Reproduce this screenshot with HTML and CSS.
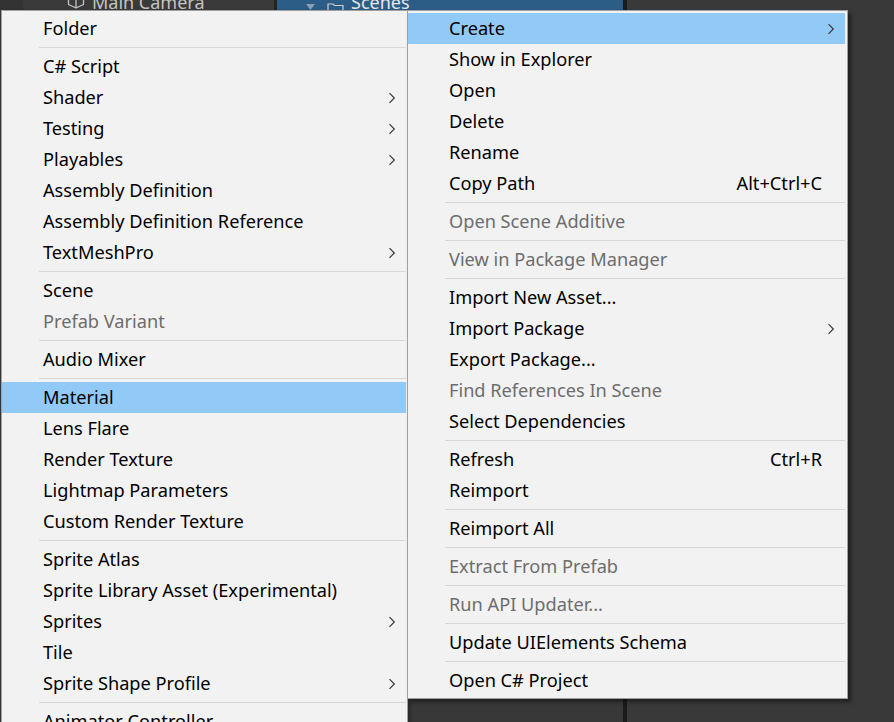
FILE: index.html
```html
<!DOCTYPE html>
<html lang="en">
<head>
<meta charset="utf-8">
<title>Project context menu</title>
<link rel="stylesheet" href="styles.css">
</head>
<body>
<div class="editor">
  <div class="panel hier">
    <div class="row hrow">
      <span class="gutter"></span>
      <svg class="cube" width="18" height="18" viewBox="0 0 18 18"><path d="M9 1.5 L16.5 5 L16.5 13.5 L9 17 L1.5 13.5 L1.5 5 Z M1.5 5 L9 8.5 L16.5 5 M9 8.5 L9 17" fill="none" stroke="#c4c4c4" stroke-width="1.3" stroke-linejoin="round"/></svg>
      <span class="hlabel">Main Camera</span>
    </div>
  </div>
  <div class="split thin"></div>
  <div class="panel tree">
    <div class="row trow">
      <svg class="tri" width="9" height="7" viewBox="0 0 9 7"><path d="M0 0 L9 0 L4.5 6 Z" fill="#8a9fb3"/></svg>
      <svg class="folder" width="17" height="14" viewBox="0 0 17 14"><path d="M1 2 L6 2 L7.5 3.5 L16 3.5 L16 13 L1 13 Z" fill="none" stroke="#d0d0d0" stroke-width="1.2"/></svg>
      <span class="tlabel">Scenes</span>
    </div>
  </div>
  <div class="split thick"></div>
  <div class="panel assets"></div>
</div>

<div class="menu menu-left">
  <div class="item"><span class="label">Folder</span></div>
  <div class="sep"></div>
  <div class="item"><span class="label">C# Script</span></div>
  <div class="item"><span class="label">Shader</span><svg class="chev" width="8" height="12" viewBox="0 0 8 12"><path d="M1.5 1.2 L6.3 6 L1.5 10.8" fill="none" stroke="#3a3a3a" stroke-width="1.2"/></svg></div>
  <div class="item"><span class="label">Testing</span><svg class="chev" width="8" height="12" viewBox="0 0 8 12"><path d="M1.5 1.2 L6.3 6 L1.5 10.8" fill="none" stroke="#3a3a3a" stroke-width="1.2"/></svg></div>
  <div class="item"><span class="label">Playables</span><svg class="chev" width="8" height="12" viewBox="0 0 8 12"><path d="M1.5 1.2 L6.3 6 L1.5 10.8" fill="none" stroke="#3a3a3a" stroke-width="1.2"/></svg></div>
  <div class="item"><span class="label">Assembly Definition</span></div>
  <div class="item"><span class="label">Assembly Definition Reference</span></div>
  <div class="item"><span class="label">TextMeshPro</span><svg class="chev" width="8" height="12" viewBox="0 0 8 12"><path d="M1.5 1.2 L6.3 6 L1.5 10.8" fill="none" stroke="#3a3a3a" stroke-width="1.2"/></svg></div>
  <div class="sep"></div>
  <div class="item"><span class="label">Scene</span></div>
  <div class="item disabled"><span class="label">Prefab Variant</span></div>
  <div class="sep"></div>
  <div class="item"><span class="label">Audio Mixer</span></div>
  <div class="sep"></div>
  <div class="item hl"><span class="label">Material</span></div>
  <div class="item"><span class="label">Lens Flare</span></div>
  <div class="item"><span class="label">Render Texture</span></div>
  <div class="item"><span class="label">Lightmap Parameters</span></div>
  <div class="item"><span class="label">Custom Render Texture</span></div>
  <div class="sep"></div>
  <div class="item"><span class="label">Sprite Atlas</span></div>
  <div class="item"><span class="label">Sprite Library Asset (Experimental)</span></div>
  <div class="item"><span class="label">Sprites</span><svg class="chev" width="8" height="12" viewBox="0 0 8 12"><path d="M1.5 1.2 L6.3 6 L1.5 10.8" fill="none" stroke="#3a3a3a" stroke-width="1.2"/></svg></div>
  <div class="item"><span class="label">Tile</span></div>
  <div class="item"><span class="label">Sprite Shape Profile</span><svg class="chev" width="8" height="12" viewBox="0 0 8 12"><path d="M1.5 1.2 L6.3 6 L1.5 10.8" fill="none" stroke="#3a3a3a" stroke-width="1.2"/></svg></div>
  <div class="sep"></div>
  <div class="item"><span class="label">Animator Controller</span></div>
  <div class="item"><span class="label">Animation</span></div>
</div>

<div class="menu menu-right">
  <div class="item hl"><span class="label">Create</span><svg class="chev" width="8" height="12" viewBox="0 0 8 12"><path d="M1.5 1.2 L6.3 6 L1.5 10.8" fill="none" stroke="#3a3a3a" stroke-width="1.2"/></svg></div>
  <div class="item"><span class="label">Show in Explorer</span></div>
  <div class="item"><span class="label">Open</span></div>
  <div class="item"><span class="label">Delete</span></div>
  <div class="item"><span class="label">Rename</span></div>
  <div class="item"><span class="label">Copy Path</span><span class="key">Alt+Ctrl+C</span></div>
  <div class="sep"></div>
  <div class="item disabled"><span class="label">Open Scene Additive</span></div>
  <div class="sep"></div>
  <div class="item disabled"><span class="label">View in Package Manager</span></div>
  <div class="sep"></div>
  <div class="item"><span class="label">Import New Asset...</span></div>
  <div class="item"><span class="label">Import Package</span><svg class="chev" width="8" height="12" viewBox="0 0 8 12"><path d="M1.5 1.2 L6.3 6 L1.5 10.8" fill="none" stroke="#3a3a3a" stroke-width="1.2"/></svg></div>
  <div class="item"><span class="label">Export Package...</span></div>
  <div class="item disabled"><span class="label">Find References In Scene</span></div>
  <div class="item"><span class="label">Select Dependencies</span></div>
  <div class="sep"></div>
  <div class="item"><span class="label">Refresh</span><span class="key">Ctrl+R</span></div>
  <div class="item"><span class="label">Reimport</span></div>
  <div class="sep"></div>
  <div class="item"><span class="label">Reimport All</span></div>
  <div class="sep"></div>
  <div class="item disabled"><span class="label">Extract From Prefab</span></div>
  <div class="sep"></div>
  <div class="item disabled"><span class="label">Run API Updater...</span></div>
  <div class="sep"></div>
  <div class="item"><span class="label">Update UIElements Schema</span></div>
  <div class="sep"></div>
  <div class="item"><span class="label">Open C# Project</span></div>
</div>
</body>
</html>
```

FILE: styles.css
```css
html, body {
  margin: 0;
  padding: 0;
  width: 894px;
  height: 722px;
  overflow: hidden;
  background: #383838;
  font-family: "Noto Sans", "Open Sans", sans-serif;
}

.editor {
  display: flex;
  height: 722px;
}

.panel {
  background: #383838;
}

.hier { width: 274px; }
.tree { width: 346px; }
.assets { flex: 1; background: #393939; }

.split.thin { width: 3px; background: #232323; }
.split.thick { width: 4px; background: #1b1b1b; }

.row {
  display: flex;
  align-items: flex-start;
  height: 20px;
  margin-top: -10px;
  overflow: hidden;
  font-size: 18px;
  line-height: 20px;
}

.hrow {
  background: #3a3a3a;
}

.hrow .gutter {
  width: 23px;
  height: 20px;
  background: #333333;
  flex: none;
}

.hrow .cube {
  margin-left: 44px;
  margin-top: 1px;
  flex: none;
}

.hlabel {
  margin-left: 7px;
  color: #c4c4c4;
  padding-top: 2px;
}

.trow {
  background: #2c5d87;
  padding-left: 29px;
}

.trow .tri {
  margin-top: 14px;
  flex: none;
}

.trow .folder {
  margin-left: 12px;
  margin-top: 12px;
  flex: none;
}

.tlabel {
  margin-left: 7px;
  color: #e6e6e6;
  padding-top: 2px;
}

/* context menus */
.menu {
  position: absolute;
  top: 10px;
  box-sizing: border-box;
  background: #f2f2f2;
  border: 1px solid #a0a0a0;
  padding: 2px 2px 2px 0;
  font-size: 18.2px;
  color: #000;
}

.menu-left {
  left: 1px;
  width: 407px;
  padding-right: 1px;
  box-shadow: 2px 2px 4px rgba(0, 0, 0, 0.3);
}

.menu-right {
  left: 407px;
  width: 441px;
  height: 689px;
  box-shadow: 3px 3px 4px rgba(0, 0, 0, 0.45);
}

.item {
  display: flex;
  align-items: center;
  box-sizing: border-box;
  height: 31px;
  padding-left: 41px;
  padding-right: 10px;
  padding-bottom: 2px;
  white-space: nowrap;
}

.item .label {
  flex: 1;
}

.item.hl {
  background: #91c9f7;
}

.item.disabled {
  color: #6d6d6d;
}

.item .key {
  margin-right: 13px;
}

.item .chev {
  flex: none;
  margin-top: 2px;
}

.sep {
  height: 7px;
  padding-left: 37px;
  display: flex;
  align-items: center;
}

.sep::after {
  content: "";
  flex: 1;
  height: 1px;
  background: #d7d7d7;
}
```
